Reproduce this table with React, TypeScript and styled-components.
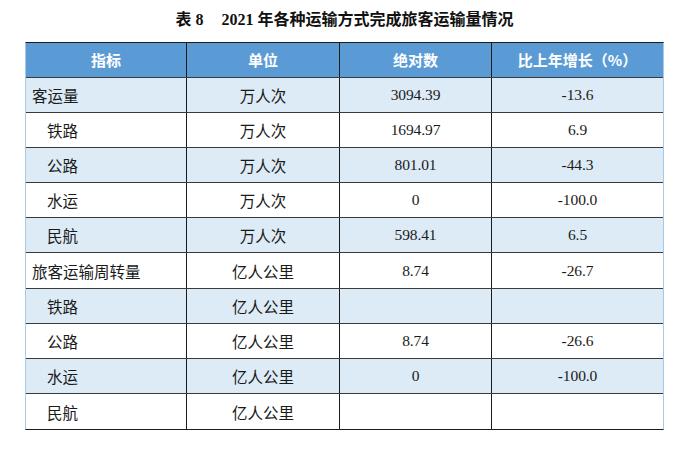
import React from "react";
import styled, { createGlobalStyle } from "styled-components";

const GlobalStyle = createGlobalStyle`
  html, body { margin: 0; padding: 0; background: #ffffff; }
  body { font-family: "Liberation Serif", "Noto Sans CJK SC", serif; color: #1a1a1a; }
  * { box-sizing: border-box; }
`;

const Page = styled.div`
  width: 689px;
  height: 450px;
  background: #ffffff;
  overflow: hidden;
`;

const Title = styled.h1`
  margin: 0;
  height: 36px;
  display: flex;
  align-items: center;
  justify-content: center;
  font-size: 16px;
  font-weight: 700;
  color: #111;
  font-family: "Liberation Serif", "Noto Sans CJK SC", sans-serif;
  letter-spacing: 0;
`;

const TitleNo = styled.span`
  margin-right: 18px;
`;

const Table = styled.div`
  margin: 5.5px 0 0 25px;
  width: 639px;
  border-top: 1.5px solid #1b1b1b;
  border-left: 1px solid #a9c9e8;
  border-right: 1px solid #a9c9e8;
  border-bottom: 1.5px solid #1b1b1b;
`;

const Row = styled.div<{ $bg: string; $h: number; $last?: boolean }>`
  display: grid;
  grid-template-columns: 160px 153px 152px 1fr;
  height: ${(p) => p.$h}px;
  background: ${(p) => p.$bg};
  border-bottom: ${(p) => (p.$last ? "none" : "1.5px solid #3a3a3a")};
`;

const HeadCell = styled.div<{ $first?: boolean }>`
  display: flex;
  align-items: center;
  justify-content: center;
  color: #ffffff;
  font-weight: 700;
  font-size: 15px;
  font-family: "Noto Sans CJK SC", sans-serif;
  border-left: ${(p) => (p.$first ? "none" : "1px solid #1b1b1b")};
`;

const Cell = styled.div<{ $first?: boolean; $indent?: number }>`
  display: flex;
  align-items: center;
  justify-content: ${(p) => (p.$first ? "flex-start" : "center")};
  padding-left: ${(p) => (p.$first ? `${p.$indent ?? 6}px` : "0")};
  font-size: 15.5px;
  color: #1a1a1a;
  border-left: ${(p) => (p.$first ? "none" : "1px solid #1b1b1b")};
  white-space: nowrap;
`;

const NumText = styled.span`
  font-family: "Liberation Serif", serif;
  font-size: 15.5px;
  letter-spacing: -0.1px;
`;

type RowData = { name: string; sub: boolean; unit: string; abs: string; growth: string };

const rows: RowData[] = [
  { name: "客运量", sub: false, unit: "万人次", abs: "3094.39", growth: "-13.6" },
  { name: "铁路", sub: true, unit: "万人次", abs: "1694.97", growth: "6.9" },
  { name: "公路", sub: true, unit: "万人次", abs: "801.01", growth: "-44.3" },
  { name: "水运", sub: true, unit: "万人次", abs: "0", growth: "-100.0" },
  { name: "民航", sub: true, unit: "万人次", abs: "598.41", growth: "6.5" },
  { name: "旅客运输周转量", sub: false, unit: "亿人公里", abs: "8.74", growth: "-26.7" },
  { name: "铁路", sub: true, unit: "亿人公里", abs: "", growth: "" },
  { name: "公路", sub: true, unit: "亿人公里", abs: "8.74", growth: "-26.6" },
  { name: "水运", sub: true, unit: "亿人公里", abs: "0", growth: "-100.0" },
  { name: "民航", sub: true, unit: "亿人公里", abs: "", growth: "" },
];

export default function App() {
  return (
    <Page>
      <GlobalStyle />
      <Title>
        <TitleNo>表 8</TitleNo>
        <span>2021 年各种运输方式完成旅客运输量情况</span>
      </Title>
      <Table>
        <Row $bg="#5b9bd5" $h={35}>
          <HeadCell $first>指标</HeadCell>
          <HeadCell>单位</HeadCell>
          <HeadCell>绝对数</HeadCell>
          <HeadCell>比上年增长（%）</HeadCell>
        </Row>
        {rows.map((r, i) => (
          <Row key={i} $bg={i % 2 === 0 ? "#ddebf7" : "#ffffff"} $h={35.2} $last={i === rows.length - 1}>
            <Cell $first $indent={r.sub ? 21 : 6}>{r.name}</Cell>
            <Cell>{r.unit}</Cell>
            <Cell><NumText>{r.abs}</NumText></Cell>
            <Cell><NumText>{r.growth}</NumText></Cell>
          </Row>
        ))}
      </Table>
    </Page>
  );
}
